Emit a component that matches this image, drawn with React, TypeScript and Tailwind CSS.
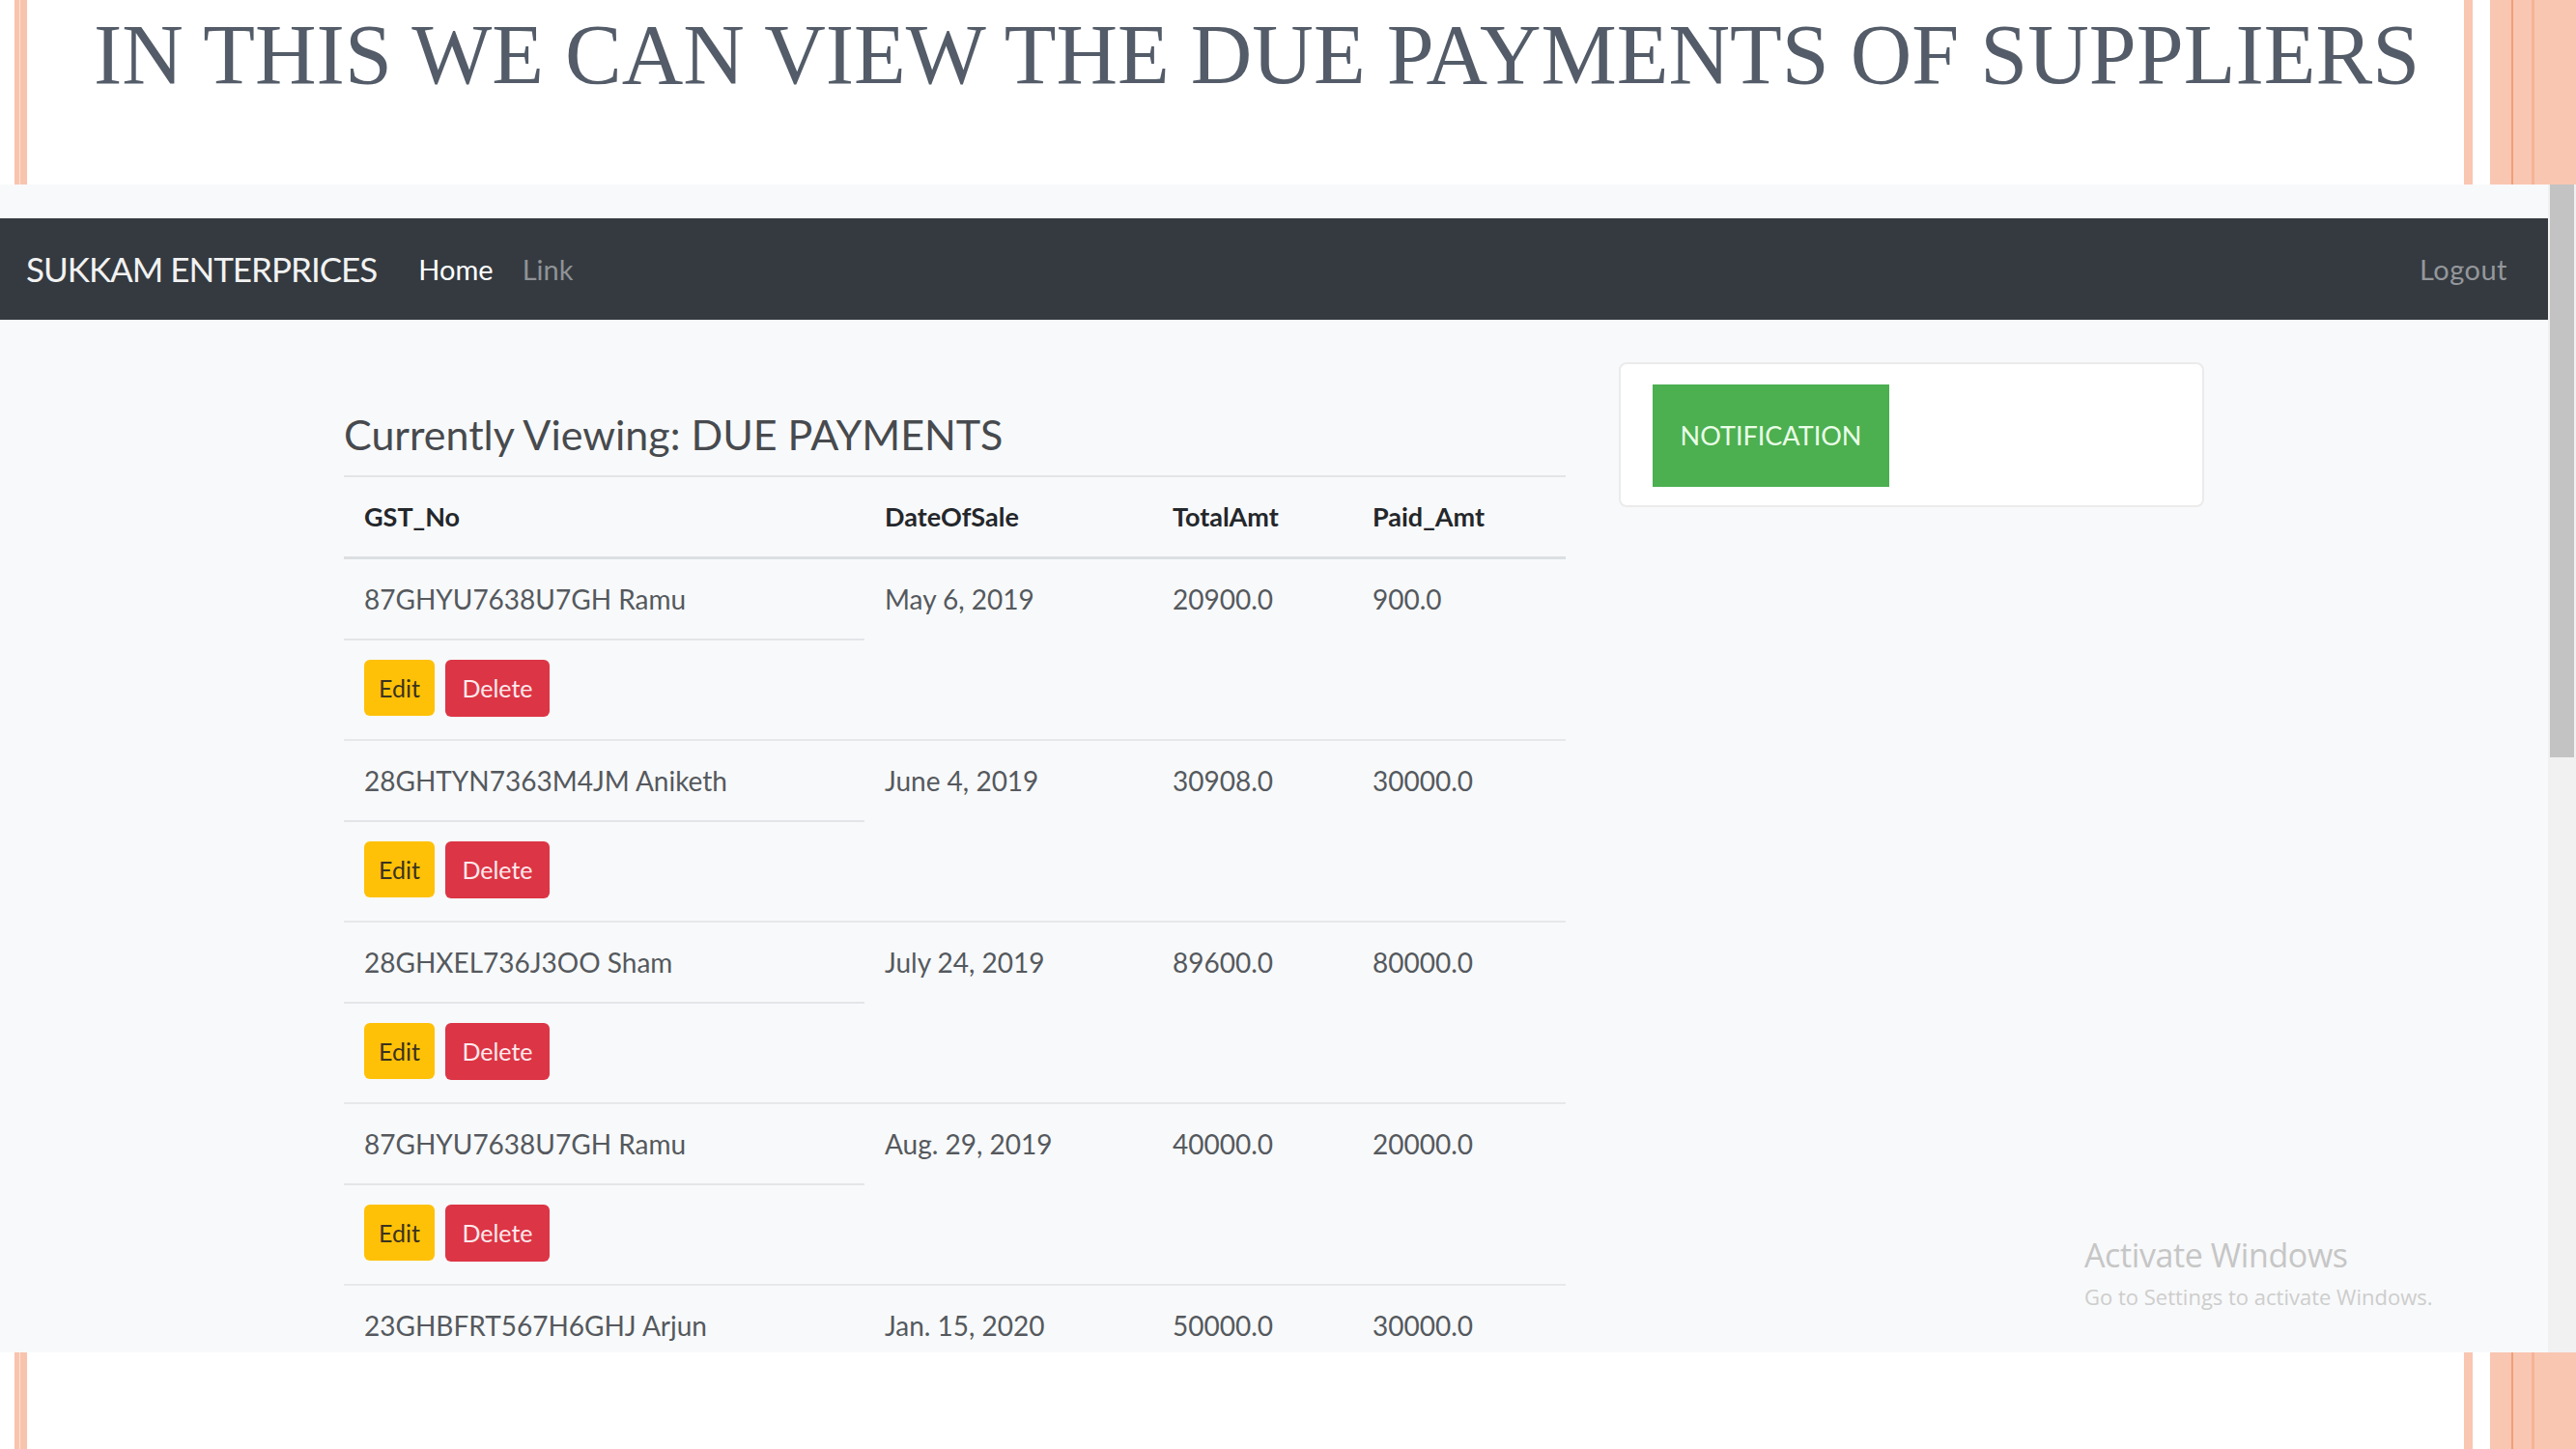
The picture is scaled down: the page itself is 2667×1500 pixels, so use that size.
const rows = [
  { gst: "87GHYU7638U7GH Ramu", date: "May 6, 2019", total: "20900.0", paid: "900.0" },
  { gst: "28GHTYN7363M4JM Aniketh", date: "June 4, 2019", total: "30908.0", paid: "30000.0" },
  { gst: "28GHXEL736J3OO Sham", date: "July 24, 2019", total: "89600.0", paid: "80000.0" },
  { gst: "87GHYU7638U7GH Ramu", date: "Aug. 29, 2019", total: "40000.0", paid: "20000.0" },
  { gst: "23GHBFRT567H6GHJ Arjun", date: "Jan. 15, 2020", total: "50000.0", paid: "30000.0" },
];

function LeftStripe() {
  return (
    <div className="ml-[15px] w-[13px] h-full flex shrink-0">
      <div className="w-[5px] bg-[#f8c4ae]" />
      <div className="w-[1px] bg-[#fde3d8]" />
      <div className="w-[7px] bg-[#f8c4ae]" />
    </div>
  );
}

function RightStripes() {
  return (
    <div className="ml-auto h-full flex shrink-0">
      <div className="w-[9px] bg-[#f9c6b1]" />
      <div className="w-[18px]" />
      <div className="w-[22px] bg-[#f9c6b1]" />
      <div className="w-[2px] bg-[#ef9f78]" />
      <div className="w-[19px] bg-[#f9c6b1]" />
      <div className="w-[3px] bg-[#f5b498]" />
      <div className="w-[43px] bg-[#f9c6b1]" />
    </div>
  );
}

export default function App() {
  return (
    <div className="w-[2667px] h-[1500px] bg-white flex flex-col overflow-hidden font-['Lato',sans-serif]">
      {/* slide title band */}
      <div className="h-[191px] flex shrink-0">
        <LeftStripe />
        <h1 className="ml-[69px] pt-[13px] text-[88px] leading-none whitespace-nowrap text-[#535c68] font-['Liberation_Serif',serif]">
          IN THIS WE CAN VIEW THE DUE PAYMENTS OF SUPPLIERS
        </h1>
        <RightStripes />
      </div>

      {/* browser screenshot */}
      <div className="relative h-[1209px] flex bg-[#f8f9fa] overflow-hidden shrink-0">
        <div className="w-[2638px] flex flex-col pt-[35px]">
          <nav className="h-[105px] bg-[#343a40] flex items-center pl-[27px] pr-[42px] shrink-0">
            <span className="text-[35px] tracking-[-1px] text-[#f2f2f2]">SUKKAM ENTERPRICES</span>
            <span className="ml-[43px] text-[29px] text-white">Home</span>
            <span className="ml-[30px] text-[29px] text-[#8f9296]">Link</span>
            <span className="ml-auto text-[29px] tracking-[0.5px] text-[#94979b]">Logout</span>
          </nav>

          <div className="flex pl-[356px]">
            <div className="w-[1265px] shrink-0">
              <h3 className="mt-[93px] mb-[16px] text-[43px] leading-[1.2] text-[#474a4e]">
                Currently Viewing: DUE PAYMENTS
              </h3>
              <div className="border-t-2 border-[#e3e5e8]">
                <div className="grid grid-cols-[539px_298px_207px_221px] border-b-[3px] border-[#dcdfe2] text-[27px] font-bold text-[#24272b] leading-[44px]">
                  <div className="py-[19px] px-[21px]">GST_No</div>
                  <div className="py-[19px] px-[21px]">DateOfSale</div>
                  <div className="py-[19px] px-[21px]">TotalAmt</div>
                  <div className="py-[19px] px-[21px]">Paid_Amt</div>
                </div>
                {rows.map((r, i) => (
                  <div
                    key={i}
                    className={
                      "grid grid-cols-[539px_298px_207px_221px] text-[28px] leading-[44px] text-[#55595e] " +
                      (i > 0 ? "border-t-2 border-[#e6e8ea]" : "")
                    }
                  >
                    <div>
                      <div className="pt-[19px] pb-[19px] px-[21px] border-b-2 border-[#e3e5e8] whitespace-nowrap">
                        {r.gst}
                      </div>
                      {i < rows.length - 1 && (
                        <div className="mt-[20px] mb-[23px] pl-[21px] flex gap-[11px]">
                          <button className="w-[73px] h-[58px] rounded-[6px] bg-[#ffc107] text-[25px] text-[#3b3320] flex items-center justify-center">
                            Edit
                          </button>
                          <button className="w-[108px] h-[59px] rounded-[6px] bg-[#dc3545] text-[25px] text-[#ffe9ec] flex items-center justify-center">
                            Delete
                          </button>
                        </div>
                      )}
                    </div>
                    <div className="pt-[19px] px-[21px] whitespace-nowrap">{r.date}</div>
                    <div className="pt-[19px] px-[21px]">{r.total}</div>
                    <div className="pt-[19px] px-[21px]">{r.paid}</div>
                  </div>
                ))}
              </div>
            </div>

            <div className="ml-[55px] mt-[44px] w-[606px] h-[150px] shrink-0 bg-white border-2 border-[#ebebeb] rounded-[8px] pl-[33px] pt-[21px]">
              <div className="w-[245px] h-[106px] bg-[#4caf50] flex items-center justify-center text-[27px] text-[#eaffe8]">
                NOTIFICATION
              </div>
            </div>
          </div>
        </div>

        <div className="w-[29px] bg-[#f1f1f1] pl-[2px] shrink-0">
          <div className="w-[25px] h-[593px] bg-[#c3c3c3]" />
        </div>

        {/* OS watermark over the page */}
        <div className="absolute left-[2158px] top-[1088px] font-['Open_Sans',sans-serif] text-[#c6c6c6]">
          <div className="text-[34px] leading-[40px] tracking-[-0.4px]">Activate Windows</div>
          <div className="mt-[8px] text-[22px] leading-[30px] text-[#cdcdcd]">Go to Settings to activate Windows.</div>
        </div>
      </div>

      {/* slide bottom band */}
      <div className="flex-1 flex">
        <LeftStripe />
        <RightStripes />
      </div>
    </div>
  );
}
